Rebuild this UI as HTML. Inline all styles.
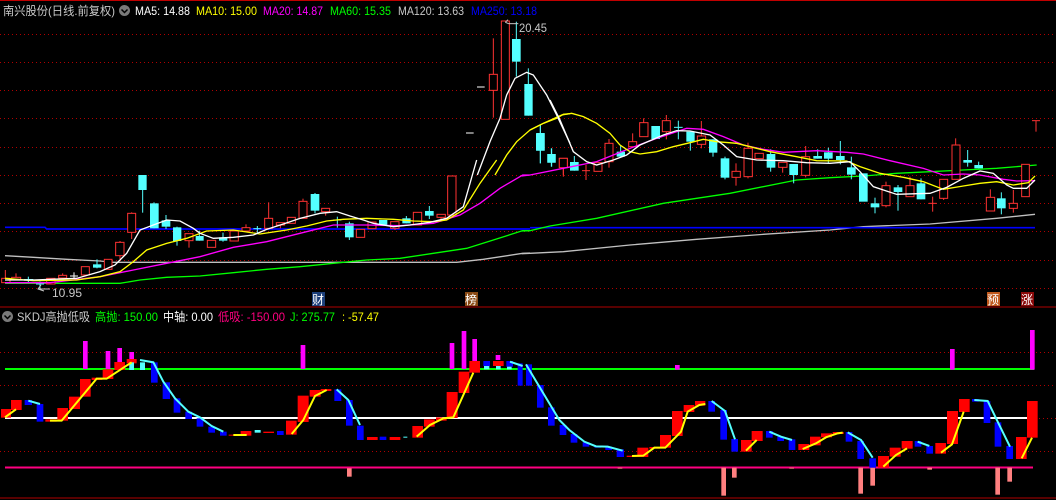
<!DOCTYPE html>
<html><head><meta charset="utf-8"><style>
html,body{margin:0;padding:0;background:#000;width:1056px;height:500px;overflow:hidden}
svg{display:block}
text{font-family:"Liberation Sans","Noto Sans CJK SC",sans-serif;font-size:12px}
.r{fill:#000;stroke:#ff3232;stroke-width:3}
.wr{stroke:#ff3232;stroke-width:3}
.c{fill:#54ffff}
.wc{stroke:#54ffff;stroke-width:3}
.ww{stroke:#fff;stroke-width:3}
.g{stroke:#b00000;stroke-width:1;stroke-dasharray:1 3}
.R{fill:#ff0000}.B{fill:#0000ff}.C{fill:#54ffff}.M{fill:#ff00ff}.P{fill:#ff8080}
.ly{fill:none;stroke:#ffff00;stroke-width:6}
.lc{fill:none;stroke:#54ffff;stroke-width:6}
</style></head><body>
<svg width="1056" height="500" viewBox="0 0 1056 500" xmlns="http://www.w3.org/2000/svg">
<rect width="1056" height="500" fill="#000"/>
<line x1="0" y1="0.5" x2="1056" y2="0.5" stroke="#c00000"/>
<g class="g">
<line x1="0" y1="34.5" x2="1056" y2="34.5"/><line x1="0" y1="62.5" x2="1056" y2="62.5"/>
<line x1="0" y1="90.5" x2="1056" y2="90.5"/><line x1="0" y1="118.5" x2="1056" y2="118.5"/>
<line x1="0" y1="147.5" x2="1056" y2="147.5"/><line x1="0" y1="175.5" x2="1056" y2="175.5"/>
<line x1="0" y1="203.5" x2="1056" y2="203.5"/><line x1="0" y1="231.5" x2="1056" y2="231.5"/>
<line x1="0" y1="260.5" x2="1056" y2="260.5"/><line x1="0" y1="288.5" x2="1056" y2="288.5"/>
<line x1="0" y1="352.5" x2="1056" y2="352.5"/><line x1="0" y1="385.5" x2="1056" y2="385.5"/>
<line x1="0" y1="451.5" x2="1056" y2="451.5"/>
</g>
<text x="3" y="15" fill="#c8c8c8" textLength="112" lengthAdjust="spacingAndGlyphs">南兴股份(日线.前复权)</text>
<circle cx="124.5" cy="10.5" r="5.5" fill="#7a7a7a"/><path d="M121.5 9.5 L124.5 12.5 L127.5 9.5" stroke="#000" stroke-width="1.5" fill="none"/>
<text x="135" y="15" fill="#fff" textLength="55" lengthAdjust="spacingAndGlyphs">MA5: 14.88</text>
<text x="196" y="15" fill="#ffff00" textLength="61" lengthAdjust="spacingAndGlyphs">MA10: 15.00</text>
<text x="263" y="15" fill="#ff00ff" textLength="60" lengthAdjust="spacingAndGlyphs">MA20: 14.87</text>
<text x="330" y="15" fill="#00ff00" textLength="61" lengthAdjust="spacingAndGlyphs">MA60: 15.35</text>
<text x="398" y="15" fill="#c8c8c8" textLength="66" lengthAdjust="spacingAndGlyphs">MA120: 13.63</text>
<text x="471" y="15" fill="#0000ff" textLength="66" lengthAdjust="spacingAndGlyphs">MA250: 13.18</text>

<g transform="translate(0,160) scale(0.333333)">
<polyline fill="none" stroke="#c0c0c0" stroke-width="4" points="15,287 100,292 200,298 300,303 340,307 1370,307 1450,298 1568,280 1590,279"/>
<polyline fill="none" stroke="#0000ff" stroke-width="5" points="15,202 135,202 140,207 1590,207"/>
<polyline fill="none" stroke="#00ff00" stroke-width="4" points="15,370 360,370 420,360 500,352 600,348 700,338 800,328 900,320 1000,310 1100,300 1200,295 1300,280 1400,265 1480,240 1568,212 1590,212"/>
<line class="wr" x1="16" y1="330" x2="16" y2="368"/><rect class="r" x="5" y="355" width="25" height="13"/>
<line class="wr" x1="48" y1="340" x2="48" y2="358"/><rect class="r" x="35" y="352" width="27" height="6"/>
<line class="wc" x1="85" y1="350" x2="85" y2="368"/><rect class="c" x="72" y="357" width="28" height="5"/>
<line class="wc" x1="120" y1="365" x2="120" y2="390"/><line class="wc" x1="108" y1="372" x2="132" y2="372"/>
<rect class="r" x="140" y="355" width="25" height="17"/>
<line class="wr" x1="188" y1="340" x2="188" y2="358"/><rect class="r" x="176" y="346" width="24" height="8"/>
<line class="ww" x1="222" y1="337" x2="222" y2="355"/><line class="ww" x1="210" y1="348" x2="234" y2="348"/>
<rect class="r" x="244" y="320" width="24" height="25"/>
<line class="wc" x1="291" y1="298" x2="291" y2="325"/><rect class="c" x="279" y="313" width="25" height="10"/>
<rect class="r" x="313" y="298" width="23" height="30"/>
<line class="wr" x1="360" y1="243" x2="360" y2="297"/><rect class="r" x="347" y="247" width="25" height="40"/>
<line class="wr" x1="395" y1="157" x2="395" y2="237"/><rect class="r" x="383" y="160" width="24" height="57"/>
<line class="wc" x1="428" y1="45" x2="428" y2="158"/><rect class="c" x="415" y="45" width="25" height="45"/>
<line class="wc" x1="462" y1="127" x2="462" y2="205"/><rect class="c" x="450" y="130" width="26" height="75"/>
<line class="wc" x1="498" y1="165" x2="498" y2="207"/><rect class="c" x="485" y="181" width="26" height="19"/>
<line class="wc" x1="531" y1="200" x2="531" y2="257"/><rect class="c" x="519" y="202" width="25" height="41"/>
<line class="wr" x1="567" y1="221" x2="567" y2="263"/><rect class="r" x="555" y="221" width="24" height="21"/>
<line class="wc" x1="598" y1="212" x2="598" y2="242"/><rect class="c" x="587" y="228" width="24" height="14"/>
<rect class="r" x="622" y="241" width="25" height="21"/>
<line class="wc" x1="669" y1="218" x2="669" y2="245"/><rect class="c" x="657" y="232" width="25" height="10"/>
<rect class="r" x="690" y="213" width="25" height="30"/>
<line class="wr" x1="738" y1="193" x2="738" y2="213"/><rect class="r" x="726" y="203" width="24" height="10"/>
<line class="wc" x1="772" y1="198" x2="772" y2="222"/><line class="wc" x1="760" y1="206" x2="784" y2="206"/>
<line class="wr" x1="806" y1="127" x2="806" y2="205"/><rect class="r" x="794" y="175" width="24" height="30"/>
<line class="wr" x1="841" y1="188" x2="841" y2="205"/><rect class="r" x="829" y="188" width="25" height="7"/>
<rect class="r" x="862" y="172" width="24" height="18"/>
<line class="wr" x1="909" y1="116" x2="909" y2="175"/><rect class="r" x="897" y="124" width="24" height="51"/>
<line class="wc" x1="945" y1="99" x2="945" y2="160"/><rect class="c" x="932" y="102" width="26" height="50"/>
<line class="wr" x1="977" y1="145" x2="977" y2="167"/><rect class="r" x="965" y="145" width="24" height="10"/>
<line class="wc" x1="1012" y1="170" x2="1012" y2="203"/><line class="wc" x1="1000" y1="180" x2="1024" y2="180"/>
<line class="wc" x1="1048" y1="185" x2="1048" y2="240"/><rect class="c" x="1035" y="190" width="26" height="42"/>
<rect class="r" x="1069" y="208" width="25" height="24"/>
<rect class="r" x="1104" y="186" width="24" height="20"/>
<rect class="c" x="1137" y="180" width="25" height="15"/>
<line class="wr" x1="1185" y1="185" x2="1185" y2="210"/><rect class="r" x="1172" y="185" width="25" height="20"/>
<line class="wc" x1="1219" y1="168" x2="1219" y2="190"/><rect class="c" x="1207" y="175" width="25" height="15"/>
<rect class="r" x="1240" y="157" width="25" height="38"/>
<line class="wc" x1="1288" y1="138" x2="1288" y2="177"/><rect class="c" x="1275" y="153" width="26" height="14"/>
<line class="wr" x1="1323" y1="163" x2="1323" y2="185"/><rect class="r" x="1311" y="163" width="25" height="9"/>
<rect class="r" x="1343" y="48" width="25" height="117"/>
<polyline fill="none" stroke="#ff00ff" stroke-width="4" points="15,368 150,368 300,350 400,330 500,310 600,290 700,262 800,245 900,220 1000,195 1100,195 1200,197 1300,190 1380,165 1440,130 1500,85 1568,45 1590,45"/>
<polyline fill="none" stroke="#ffff00" stroke-width="4" points="15,355 100,362 230,360 300,350 360,335 400,305 440,270 500,250 560,235 620,213 700,210 780,222 860,210 920,198 980,183 1030,178 1100,175 1180,178 1240,183 1300,185 1340,180 1390,150 1440,70 1490,0"/>
<polyline fill="none" stroke="#ffffff" stroke-width="4" points="15,360 100,360 230,355 300,335 345,315 380,280 420,210 460,195 500,180 540,183 580,205 600,220 640,235 700,232 760,225 800,208 850,192 900,175 960,160 1010,155 1050,168 1090,180 1120,190 1180,200 1230,195 1290,187 1340,175 1390,140 1430,0"/>
</g>

<g transform="translate(400,15) scale(0.333333)">
<line x1="231" y1="216" x2="254" y2="216" class="ww"/><line x1="198" y1="354" x2="221" y2="354" class="ww"/>
<line class="wr" x1="280" y1="70" x2="280" y2="308"/><rect class="r" x="268" y="178" width="24" height="48"/>
<rect class="r" x="304" y="18" width="24" height="295"/>
<line class="wc" x1="349" y1="20" x2="349" y2="185"/><rect class="c" x="336" y="72" width="26" height="68"/>
<line class="wc" x1="385" y1="160" x2="385" y2="302"/><rect class="c" x="373" y="207" width="25" height="95"/>
<line class="wc" x1="421" y1="330" x2="421" y2="445"/><rect class="c" x="409" y="354" width="25" height="53"/>
<line class="wc" x1="455" y1="400" x2="455" y2="455"/><rect class="c" x="442" y="417" width="25" height="26"/>
<line class="wr" x1="490" y1="430" x2="490" y2="480"/><rect class="r" x="478" y="430" width="24" height="27"/>
<polyline fill="none" stroke="#ffff00" stroke-width="4" points="285,480 320,420 350,380 390,345 430,325 470,310 490,298 510,296"/>
<polyline fill="none" stroke="#ffffff" stroke-width="4" points="232,480 270,380 300,310 320,240 345,190 380,172 400,180 440,240 470,300 510,385"/>
<path d="M316 22 L324 14 M316 22 L326 26" stroke="#c8c8c8" stroke-width="3" fill="none"/>
<line x1="326" y1="26" x2="355" y2="26" stroke="#c8c8c8" stroke-width="3"/>
</g>
<text x="519" y="32" fill="#c8c8c8" textLength="28" lengthAdjust="spacingAndGlyphs">20.45</text>

<g transform="translate(530,100) scale(0.333333)">
<polyline fill="none" stroke="#c0c0c0" stroke-width="4" points="-25,461 0,460 100,455 300,435 500,418 700,403 900,390 1000,380 1200,372 1400,355 1515,343"/>
<line x1="0" y1="383" x2="1515" y2="383" stroke="#0000ff" stroke-width="5"/>
<polyline fill="none" stroke="#00ff00" stroke-width="4" points="-25,393 0,392 60,378 200,355 400,310 600,280 800,240 900,233 1000,228 1100,220 1200,215 1300,210 1400,205 1520,195"/>
<line class="wc" x1="31" y1="75" x2="31" y2="190"/><rect class="c" x="18" y="100" width="26" height="52"/>
<line class="wc" x1="64" y1="145" x2="64" y2="200"/><rect class="c" x="52" y="162" width="25" height="26"/>
<line class="wr" x1="100" y1="175" x2="100" y2="230"/><rect class="r" x="88" y="175" width="24" height="28"/>
<line class="wc" x1="133" y1="168" x2="133" y2="212"/><rect class="c" x="120" y="186" width="26" height="26"/>
<line class="wr" x1="168" y1="195" x2="168" y2="240"/><line class="wr" x1="156" y1="212" x2="180" y2="212"/>
<rect class="r" x="192" y="188" width="24" height="26"/>
<line class="wr" x1="237" y1="117" x2="237" y2="203"/><rect class="r" x="225" y="130" width="24" height="55"/>
<line class="wc" x1="272" y1="135" x2="272" y2="170"/><rect class="c" x="260" y="155" width="25" height="15"/>
<line class="wr" x1="308" y1="100" x2="308" y2="140"/><rect class="r" x="296" y="125" width="24" height="15"/>
<line class="wr" x1="341" y1="55" x2="341" y2="110"/><rect class="r" x="329" y="68" width="25" height="42"/>
<rect class="c" x="364" y="78" width="26" height="39"/>
<line class="wr" x1="409" y1="45" x2="409" y2="118"/><rect class="r" x="397" y="62" width="24" height="33"/>
<line class="wc" x1="445" y1="62" x2="445" y2="118"/><line class="wc" x1="432" y1="82" x2="458" y2="82"/>
<line class="wc" x1="481" y1="95" x2="481" y2="152"/><rect class="c" x="469" y="95" width="25" height="30"/>
<line class="wr" x1="514" y1="63" x2="514" y2="145"/><rect class="r" x="502" y="108" width="25" height="25"/>
<line class="wc" x1="549" y1="118" x2="549" y2="170"/><rect class="c" x="537" y="118" width="25" height="40"/>
<line class="wc" x1="585" y1="170" x2="585" y2="238"/><rect class="c" x="572" y="175" width="26" height="58"/>
<line class="wr" x1="618" y1="190" x2="618" y2="257"/><rect class="r" x="606" y="214" width="25" height="18"/>
<line class="wr" x1="654" y1="128" x2="654" y2="235"/><rect class="r" x="642" y="145" width="25" height="85"/>
<rect class="r" x="675" y="160" width="25" height="16"/>
<line class="wc" x1="722" y1="148" x2="722" y2="215"/><rect class="c" x="710" y="162" width="26" height="41"/>
<line class="wr" x1="758" y1="187" x2="758" y2="218"/><rect class="r" x="746" y="187" width="25" height="15"/>
<line class="wc" x1="791" y1="192" x2="791" y2="250"/><rect class="c" x="778" y="192" width="26" height="33"/>
<line class="wr" x1="827" y1="138" x2="827" y2="232"/><rect class="r" x="815" y="170" width="24" height="56"/>
<line class="wc" x1="863" y1="148" x2="863" y2="176"/><rect class="c" x="850" y="168" width="26" height="8"/>
<line class="wc" x1="895" y1="143" x2="895" y2="190"/><rect class="c" x="882" y="157" width="26" height="19"/>
<line class="wc" x1="931" y1="123" x2="931" y2="193"/><rect class="c" x="918" y="168" width="26" height="12"/>
<line class="wc" x1="964" y1="170" x2="964" y2="238"/><rect class="c" x="951" y="202" width="26" height="22"/>
<rect class="c" x="987" y="220" width="26" height="85"/>
<line class="wc" x1="1035" y1="293" x2="1035" y2="340"/><rect class="c" x="1022" y="310" width="26" height="12"/>
<line class="wr" x1="1068" y1="245" x2="1068" y2="322"/><rect class="r" x="1056" y="257" width="24" height="60"/>
<line class="wc" x1="1104" y1="255" x2="1104" y2="332"/><rect class="c" x="1091" y="262" width="26" height="14"/>
<line class="wr" x1="1140" y1="230" x2="1140" y2="290"/><rect class="r" x="1128" y="257" width="24" height="33"/>
<line class="wc" x1="1173" y1="235" x2="1173" y2="298"/><rect class="c" x="1160" y="250" width="26" height="48"/>
<line class="wr" x1="1208" y1="290" x2="1208" y2="335"/><line class="wr" x1="1196" y1="310" x2="1220" y2="310"/>
<line class="wr" x1="1241" y1="238" x2="1241" y2="300"/><rect class="r" x="1229" y="238" width="24" height="57"/>
<line class="wr" x1="1277" y1="115" x2="1277" y2="238"/><rect class="r" x="1266" y="135" width="24" height="103"/>
<line class="wc" x1="1313" y1="150" x2="1313" y2="200"/><rect class="c" x="1300" y="180" width="26" height="8"/>
<line class="wc" x1="1346" y1="185" x2="1346" y2="205"/><rect class="c" x="1333" y="195" width="26" height="10"/>
<line class="wr" x1="1381" y1="268" x2="1381" y2="333"/><rect class="r" x="1369" y="292" width="25" height="41"/>
<line class="wc" x1="1414" y1="277" x2="1414" y2="343"/><rect class="c" x="1401" y="295" width="26" height="30"/>
<line class="wr" x1="1450" y1="270" x2="1450" y2="338"/><rect class="r" x="1438" y="310" width="24" height="15"/>
<rect class="r" x="1475" y="193" width="23" height="97"/>
<line class="wr" x1="1518" y1="62" x2="1518" y2="95"/><line class="wr" x1="1506" y1="62" x2="1530" y2="62"/>
<polyline fill="none" stroke="#ff00ff" stroke-width="4" points="-25,228 0,225 100,205 200,185 300,145 380,115 470,85 520,88 580,110 640,135 700,148 760,157 860,152 950,157 1000,162 1080,182 1180,205 1240,225 1300,222 1350,225 1420,238 1460,243 1515,242"/>
<polyline fill="none" stroke="#ffff00" stroke-width="4" points="0,90 40,70 95,45 125,40 160,50 200,70 240,100 270,135 300,155 330,162 380,155 430,140 480,128 520,118 560,125 620,130 660,140 720,155 800,170 860,182 950,183 990,200 1050,220 1120,232 1180,245 1240,268 1300,258 1350,250 1400,245 1450,255 1495,248 1515,228"/>
<polyline fill="none" stroke="#ffffff" stroke-width="4" points="60,0 90,60 130,155 170,185 200,195 250,180 290,165 330,135 400,105 440,92 480,93 540,105 580,135 620,170 680,180 760,182 830,188 900,190 960,185 990,215 1030,260 1100,283 1200,280 1250,262 1300,235 1350,213 1390,220 1430,255 1450,265 1490,265 1515,240"/>
</g>
<path d="M41 285 L38 289 L44 291 M38 289 L50 289" stroke="#c8c8c8" fill="none"/>
<text x="52" y="297" fill="#c8c8c8" textLength="30" lengthAdjust="spacingAndGlyphs">10.95</text>
<rect x="312" y="292" width="13" height="14" fill="#1c3f7a"/><text x="312" y="304" fill="#fff" style="font-size:12px">财</text>
<rect x="465" y="292" width="13" height="14" fill="#8a4a14"/><text x="465" y="304" fill="#fff" style="font-size:12px">榜</text>
<rect x="987" y="292" width="13" height="14" fill="#c0581c"/><text x="987" y="304" fill="#fff" style="font-size:12px">预</text>
<rect x="1021" y="292" width="13" height="14" fill="#8a0a0a"/><text x="1021" y="304" fill="#fff" style="font-size:12px">涨</text>
<line x1="0" y1="307" x2="1056" y2="307" stroke="#b00000"/>
<line x1="0" y1="498" x2="1056" y2="498" stroke="#b00000"/>
<circle cx="7.5" cy="316.5" r="5.5" fill="#7a7a7a"/><path d="M4.5 315.5 L7.5 318.5 L10.5 315.5" stroke="#000" stroke-width="1.5" fill="none"/>
<text x="17" y="321" fill="#c8c8c8" textLength="73" lengthAdjust="spacingAndGlyphs">SKDJ高抛低吸</text>
<text x="95" y="321" fill="#00ff00" textLength="63" lengthAdjust="spacingAndGlyphs">高抛: 150.00</text>
<text x="163" y="321" fill="#fff" textLength="50" lengthAdjust="spacingAndGlyphs">中轴: 0.00</text>
<text x="218" y="321" fill="#ff0080" textLength="67" lengthAdjust="spacingAndGlyphs">低吸: -150.00</text>
<text x="290" y="321" fill="#00ff00" textLength="45" lengthAdjust="spacingAndGlyphs">J: 275.77</text>
<text x="342" y="321" fill="#ffff00" textLength="37" lengthAdjust="spacingAndGlyphs">: -57.47</text>
<line x1="5" y1="369" x2="1034" y2="369" stroke="#00ff00" stroke-width="2"/>
<line x1="5" y1="418" x2="1027" y2="418" stroke="#fff" stroke-width="2"/>
<line x1="1027" y1="418.5" x2="1056" y2="418.5" class="g"/>
<line x1="5" y1="467.5" x2="1033" y2="467.5" stroke="#ff0080" stroke-width="2"/>
<g transform="translate(0,330) scale(0.333333)">
<rect class="M" x="249" y="33" width="14" height="84"/><rect class="M" x="317" y="63" width="14" height="54"/>
<rect class="M" x="352" y="54" width="14" height="63"/><rect class="M" x="388" y="66" width="14" height="51"/>
<rect class="M" x="902" y="45" width="14" height="72"/><rect class="M" x="1349" y="39" width="14" height="78"/>
<rect class="M" x="1385" y="3" width="14" height="114"/><rect class="M" x="1417" y="27" width="14" height="90"/>
<rect class="M" x="1487" y="75" width="14" height="15"/>
<rect class="P" x="1041" y="415" width="14" height="25"/>
<rect class="R" x="3" y="237" width="30" height="26"/><rect class="R" x="33" y="210" width="32" height="30"/>
<rect class="B" x="74" y="210" width="22" height="15"/><rect class="B" x="110" y="222" width="20" height="53"/>
<rect class="R" x="136" y="268" width="34" height="7"/><rect class="R" x="172" y="234" width="32" height="38"/>
<rect class="R" x="207" y="200" width="33" height="37"/><rect class="R" x="240" y="147" width="32" height="53"/>
<rect class="R" x="275" y="143" width="32" height="7"/><rect class="R" x="308" y="118" width="32" height="29"/>
<rect class="R" x="343" y="96" width="32" height="24"/><rect class="R" x="380" y="87" width="30" height="13"/>
<rect class="C" x="388" y="97" width="14" height="23"/><rect class="C" x="420" y="97" width="15" height="23"/>
<rect class="B" x="453" y="97" width="20" height="61"/><rect class="B" x="488" y="157" width="22" height="50"/>
<rect class="B" x="521" y="205" width="20" height="43"/><rect class="B" x="556" y="245" width="20" height="22"/>
<rect class="B" x="590" y="265" width="20" height="25"/><rect class="B" x="625" y="290" width="20" height="18"/>
<rect class="B" x="660" y="305" width="20" height="12"/><rect class="R" x="686" y="314" width="34" height="3"/>
<rect class="R" x="722" y="303" width="32" height="14"/><rect class="C" x="764" y="300" width="18" height="8"/>
<rect class="R" x="790" y="305" width="32" height="4"/><rect class="B" x="831" y="303" width="20" height="12"/>
<rect class="R" x="858" y="272" width="32" height="42"/><rect class="R" x="893" y="197" width="33" height="79"/>
<rect class="R" x="929" y="180" width="33" height="20"/><rect class="R" x="962" y="177" width="32" height="6"/>
<rect class="B" x="1003" y="178" width="21" height="35"/><rect class="B" x="1038" y="210" width="20" height="77"/>
<rect class="B" x="1071" y="287" width="20" height="43"/><rect class="R" x="1101" y="321" width="32" height="9"/>
<rect class="B" x="1139" y="320" width="20" height="10"/><rect class="R" x="1169" y="321" width="32" height="9"/>
<rect class="C" x="1210" y="320" width="12" height="3"/><rect class="R" x="1237" y="288" width="32" height="35"/>
<rect class="R" x="1272" y="268" width="32" height="22"/><rect class="R" x="1308" y="262" width="32" height="10"/>
<rect class="R" x="1340" y="186" width="33" height="78"/><rect class="R" x="1376" y="125" width="32" height="64"/>
<rect class="R" x="1408" y="93" width="32" height="35"/><rect class="B" x="1450" y="93" width="20" height="15"/>
<rect class="C" x="1452" y="108" width="16" height="10"/><rect class="R" x="1479" y="93" width="32" height="15"/>
<rect class="C" x="1488" y="108" width="14" height="10"/><rect class="B" x="1519" y="93" width="20" height="17"/>
<rect class="C" x="1521" y="110" width="14" height="8"/><rect class="B" x="1553" y="100" width="15" height="67"/>
<polyline class="ly" points="15,262 48,238"/>
<polyline class="lc" points="85,212 120,222"/>
<polyline class="ly" points="150,272 185,272 290,146 320,146 395,97"/>
<polyline class="lc" points="420,90 460,97 490,155 525,205 565,245 600,262 635,288 670,305"/>
<polyline class="ly" points="700,315 740,315"/>
<polyline class="ly" points="875,312 910,270 945,198 980,180"/>
<polyline class="lc" points="1010,178 1045,210 1080,285"/>
<polyline class="ly" points="1250,320 1290,285 1330,265 1360,262 1420,128"/>
<polyline class="lc" points="1530,95 1568,108"/>
</g>
<g transform="translate(526,330) scale(0.333333)">
<rect class="M" x="447" y="105" width="14" height="14"/><rect class="M" x="1272" y="57" width="14" height="62"/>
<rect class="M" x="1512" y="0" width="14" height="119"/>
<rect class="P" x="275" y="413" width="14" height="3"/><rect class="P" x="586" y="413" width="14" height="84"/>
<rect class="P" x="618" y="413" width="14" height="30"/><rect class="P" x="790" y="413" width="14" height="3"/>
<rect class="P" x="997" y="413" width="14" height="78"/><rect class="P" x="1033" y="413" width="14" height="54"/>
<rect class="P" x="1204" y="413" width="14" height="6"/><rect class="P" x="1408" y="413" width="14" height="81"/>
<rect class="P" x="1444" y="413" width="14" height="42"/>
<rect class="B" x="0" y="103" width="18" height="64"/><rect class="B" x="33" y="165" width="20" height="68"/>
<rect class="B" x="66" y="232" width="20" height="55"/><rect class="B" x="101" y="285" width="20" height="30"/>
<rect class="B" x="134" y="312" width="20" height="26"/><rect class="B" x="170" y="337" width="20" height="13"/>
<rect class="B" x="205" y="347" width="20" height="6"/><rect class="B" x="238" y="350" width="20" height="10"/>
<rect class="B" x="272" y="358" width="22" height="23"/><rect class="R" x="302" y="377" width="32" height="4"/>
<rect class="R" x="334" y="353" width="33" height="28"/><rect class="R" x="370" y="351" width="32" height="5"/>
<rect class="R" x="402" y="315" width="33" height="38"/><rect class="R" x="438" y="243" width="32" height="75"/>
<rect class="R" x="473" y="225" width="32" height="21"/><rect class="R" x="507" y="213" width="31" height="14"/>
<rect class="B" x="547" y="213" width="20" height="32"/><rect class="B" x="583" y="240" width="20" height="89"/>
<rect class="B" x="616" y="327" width="20" height="38"/><rect class="R" x="645" y="330" width="32" height="35"/>
<rect class="R" x="677" y="303" width="33" height="30"/><rect class="B" x="720" y="303" width="20" height="20"/>
<rect class="B" x="754" y="320" width="20" height="13"/><rect class="B" x="788" y="328" width="20" height="32"/>
<rect class="R" x="817" y="342" width="33" height="18"/><rect class="R" x="852" y="320" width="32" height="26"/>
<rect class="R" x="885" y="310" width="33" height="12"/><rect class="R" x="920" y="306" width="33" height="6"/>
<rect class="B" x="959" y="306" width="20" height="29"/><rect class="B" x="994" y="333" width="20" height="54"/>
<rect class="B" x="1030" y="385" width="20" height="28"/><rect class="R" x="1056" y="378" width="33" height="35"/>
<rect class="R" x="1091" y="353" width="33" height="27"/><rect class="R" x="1127" y="333" width="33" height="23"/>
<rect class="B" x="1166" y="333" width="20" height="17"/><rect class="B" x="1201" y="348" width="20" height="23"/>
<rect class="R" x="1228" y="339" width="32" height="32"/><rect class="R" x="1263" y="243" width="33" height="99"/>
<rect class="R" x="1299" y="207" width="32" height="39"/><rect class="B" x="1338" y="207" width="20" height="8"/>
<rect class="B" x="1373" y="213" width="20" height="66"/><rect class="B" x="1406" y="277" width="20" height="73"/>
<rect class="B" x="1441" y="348" width="20" height="39"/><rect class="R" x="1470" y="321" width="32" height="66"/>
<rect class="R" x="1503" y="213" width="32" height="110"/>
<polyline class="lc" points="0,103 40,170 100,270 130,300 175,335 210,349 245,350 290,362"/>
<polyline class="ly" points="318,378 352,377 385,353 418,353 465,305 485,245 520,225 538,222"/>
<polyline class="lc" points="557,213 597,243 627,328"/>
<polyline class="ly" points="660,362 692,330"/>
<polyline class="lc" points="730,305 765,320 798,330"/>
<polyline class="ly" points="830,357 870,340 900,322 935,310 950,308"/>
<polyline class="lc" points="965,307 1005,330 1040,383"/>
<polyline class="ly" points="1072,410 1110,375 1143,355"/>
<polyline class="lc" points="1175,335 1210,348"/>
<polyline class="ly" points="1245,368 1278,343 1313,245"/>
<polyline class="lc" points="1345,210 1385,213 1415,275 1452,350"/>
<polyline class="ly" points="1487,385 1518,323"/>
</g>
</svg>
</body></html>
